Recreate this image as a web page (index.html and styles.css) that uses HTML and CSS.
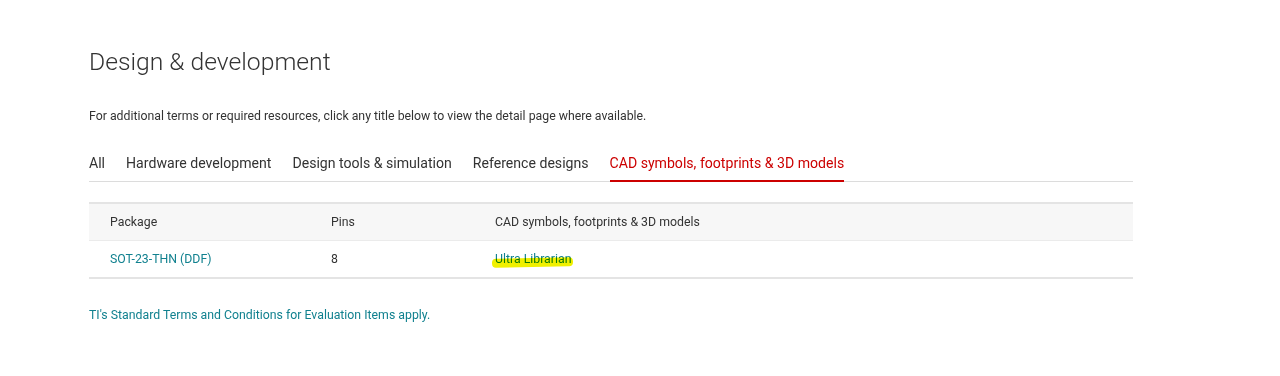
FILE: index.html
```html
<!DOCTYPE html>
<html lang="en">
<head>
    <meta charset="UTF-8">
    <meta name="viewport" content="width=device-width, initial-scale=1.0">
    <title>Design &amp; development</title>
    <link rel="stylesheet" href="styles.css">
</head>
<body>
    <div class="section">
        <h2 class="section-title">Design &amp; development</h2>
        <p class="intro">For additional terms or required resources, click any title below to view the detail page where available.</p>

        <div class="tabs">
            <a class="tab">All</a>
            <a class="tab">Hardware development</a>
            <a class="tab">Design tools &amp; simulation</a>
            <a class="tab">Reference designs</a>
            <a class="tab active">CAD symbols, footprints &amp; 3D models</a>
        </div>

        <table class="cad-table">
            <thead>
                <tr>
                    <th class="col-package">Package</th>
                    <th class="col-pins">Pins</th>
                    <th>CAD symbols, footprints &amp; 3D models</th>
                </tr>
            </thead>
            <tbody>
                <tr>
                    <td><a class="link">SOT-23-THN (DDF)</a></td>
                    <td>8</td>
                    <td><a class="link marked">Ultra Librarian</a></td>
                </tr>
            </tbody>
        </table>

        <p class="terms"><a class="link">TI's Standard Terms and Conditions for Evaluation Items apply.</a></p>
    </div>
</body>
</html>
```

FILE: styles.css
```css
body {
    margin: 0;
    background: #fff;
    font-family: Roboto, "Liberation Sans", Arial, sans-serif;
    color: #333;
}
.section {
    width: 1044px;
    margin-left: 89px;
    padding-top: 44px;
}
.section-title {
    margin: 0;
    font-size: 24.7px;
    font-weight: 300;
    line-height: 36px;
    color: #333;
}
.intro {
    margin: 27px 0 0;
    font-size: 12.3px;
    line-height: 18px;
    color: #333;
}
.tabs {
    display: flex;
    gap: 21px;
    margin-top: 23px;
    border-bottom: 1px solid #dcdcdc;
}
.tab {
    padding: 5px 0 7px;
    font-size: 14.1px;
    line-height: 20px;
    color: #333;
    border-bottom: 2px solid transparent;
    margin-bottom: -1px;
    cursor: pointer;
}
.tab.active {
    color: #cc0000;
    border-bottom-color: #cc0000;
}
.cad-table {
    width: 100%;
    margin-top: 20px;
    border-collapse: collapse;
    font-size: 12.3px;
}
.cad-table th,
.cad-table td {
    text-align: left;
    padding: 0 21px;
    height: 36px;
}
.cad-table th {
    font-weight: 400;
    color: #333;
    background: #f7f7f7;
    border-top: 2px solid #e4e4e4;
    border-bottom: 1px solid #ebebeb;
}
.cad-table td {
    border-bottom: 2px solid #e4e4e4;
}
.col-package {
    width: 179px;
}
.col-pins {
    width: 122px;
}
.link {
    color: #11818f;
    text-decoration: none;
    cursor: pointer;
}
.marked {
    position: relative;
}
.marked::after {
    content: "";
    position: absolute;
    left: -3px;
    right: -2px;
    top: 6px;
    height: 9px;
    background: #f0f000;
    border-radius: 4px;
    transform: rotate(-1.2deg);
    mix-blend-mode: multiply;
}
.terms {
    margin: 27px 0 0;
    font-size: 12.3px;
    line-height: 18px;
}
```
